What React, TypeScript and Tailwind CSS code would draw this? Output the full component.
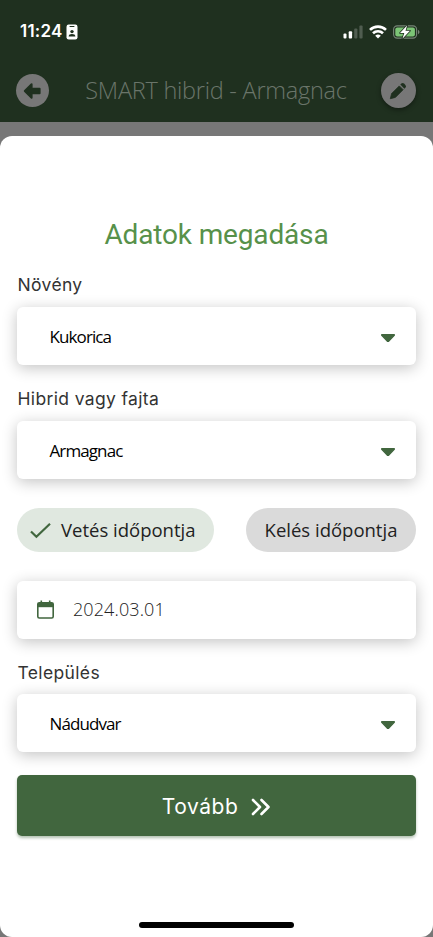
import { useState } from 'react';
import type { ReactNode } from 'react';

function StatusBar() {
  return (
    <div className="flex h-[63px] items-center pl-[20px] pr-[13px] text-white">
      <span className="font-['Inter'] text-[17px] font-semibold leading-none tracking-[0.2px]">11:24</span>
      <svg className="ml-[4px]" width="12" height="16" viewBox="0 0 12 16">
        <rect x="0.5" y="0.5" width="11" height="15" rx="2.2" fill="#fff" />
        <rect x="3.5" y="2" width="5" height="1" rx="0.5" fill="#1f301f" />
        <circle cx="6" cy="7.6" r="1.7" fill="#1f301f" />
        <path d="M2.6 12.6c0-1.8 1.5-2.6 3.4-2.6s3.4.8 3.4 2.6z" fill="#1f301f" />
      </svg>
      <div className="ml-auto flex items-center">
        <svg width="20" height="14" viewBox="0 0 20 14" fill="#fff">
          <rect x="0.5" y="8.5" width="3" height="5" rx="1" />
          <rect x="5.7" y="6.3" width="3.4" height="7.2" rx="1" />
          <rect x="11.2" y="3.6" width="3.2" height="9.9" rx="1" fillOpacity="0.22" />
          <rect x="16.4" y="0.5" width="3.2" height="13" rx="1" fillOpacity="0.22" />
        </svg>
        <svg className="ml-[6px]" width="18" height="14" viewBox="0 0 18 14" fill="none" stroke="#fff" strokeWidth="2.6">
          <path d="M1 4.9a11.5 11.5 0 0 1 16 0" />
          <path d="M4 8.3a7.2 7.2 0 0 1 10 0" />
          <path d="M9 13.6 6.2 10.8a4 4 0 0 1 5.6 0z" fill="#fff" stroke="none" />
        </svg>
        <svg className="ml-[6px]" width="27" height="14" viewBox="0 0 27 14">
          <rect x="0.6" y="0.9" width="23" height="12.2" rx="3.6" fill="none" stroke="#778577" strokeWidth="1.1" />
          <rect x="2.3" y="2.6" width="19.6" height="8.8" rx="2" fill="#7cc576" />
          <path d="M25 5v4.2c.9-.4 1.5-1.2 1.5-2.1S25.9 5.4 25 5z" fill="#778577" />
          <path
            d="M14.2 0.3 7 8h4.3l-1.9 5.7 7.6-7.9h-4.5z"
            fill="#fff"
            stroke="#1f301f"
            strokeWidth="1.6"
            strokeLinejoin="round"
            paintOrder="stroke"
          />
        </svg>
      </div>
    </div>
  );
}

function Header() {
  return (
    <header className="h-[122px] bg-[#1f301f]">
      <StatusBar />
      <div className="flex h-[55px] items-center justify-between pl-4 pr-[17px]">
        <button className="flex size-[33px] items-center justify-center rounded-full bg-[#777]">
          <svg width="19" height="18" viewBox="0 0 19 18" fill="#1f301f" stroke="#1f301f" strokeLinejoin="round">
            <path d="M1.8 9 8.6 2.3V6.8H16.600v4.400H8.600v4.500z" strokeWidth="2" />
          </svg>
        </button>
        <h1 className="whitespace-nowrap pl-[2px] font-['Open_Sans'] text-[23.5px] font-light leading-none tracking-[-0.25px] text-[#6a756a]">
          SMART hibrid - Armagnac
        </h1>
        <button className="flex size-[35px] items-center justify-center rounded-full bg-[#777] shadow-[0_2px_5px_rgba(0,0,0,0.4)]">
          <svg width="18" height="18" viewBox="0 0 18 18" fill="#1f301f">
            <path
              d="M1.3 16.7l1.3-5.1 7.7-7.7 3.8 3.8-7.7 7.7z"
              strokeLinejoin="round"
              stroke="#1f301f"
              strokeWidth="0.8"
            />
            <path d="M11.3 2.6l1-1a2 2 0 0 1 2.8 0l1.3 1.3a2 2 0 0 1 0 2.8l-1 1z" />
          </svg>
        </button>
      </div>
    </header>
  );
}

function Card({ children }: { children: ReactNode }) {
  return (
    <div className="flex h-[58px] items-center rounded-md bg-white shadow-[0_3px_15px_rgba(0,0,0,0.24)]">
      {children}
    </div>
  );
}

function Label({ children }: { children: ReactNode }) {
  return (
    <label className="block h-[22px] pl-[0.5px] font-['Inter'] text-[17.5px] leading-[22px] tracking-[0.35px] text-[#333]">
      {children}
    </label>
  );
}

function SelectField({ value }: { value: string }) {
  return (
    <Card>
      <span className="pl-[32.5px] pt-[2px] font-['Open_Sans'] text-[17px] leading-6 tracking-[-0.9px] text-black">{value}</span>
      <svg className="ml-auto mr-[20px] mt-[4px]" width="16" height="10" viewBox="0 0 16 10">
        <path d="M1.7 1.5h12.6v.8L8.6 8.3H7.4L1.7 2.3z" fill="#41663e" stroke="#41663e" strokeWidth="1.2" strokeLinejoin="round" />
      </svg>
    </Card>
  );
}

export default function App() {
  const [mode, setMode] = useState('vetes');

  return (
    <div className="flex h-[937px] w-[433px] flex-col overflow-hidden bg-[#777]">
      <Header />

      <main className="mt-[13.5px] flex flex-1 flex-col rounded-xl bg-white px-[17px]">
        <h2 className="mt-[81px] text-center font-['Roboto'] text-[28px] leading-9 tracking-[-0.16px] text-[#57914a]">
          Adatok megadása
        </h2>

        <div className="mt-[21px]">
          <Label>Növény</Label>
          <div className="mt-[11px]">
            <SelectField value="Kukorica" />
          </div>
        </div>

        <div className="mt-[23px]">
          <Label>Hibrid vagy fajta</Label>
          <div className="mt-[11px]">
            <SelectField value="Armagnac" />
          </div>
        </div>

        <div className="mt-[29px] flex justify-between font-['Open_Sans'] text-[18.5px] text-[#222]">
          <button onClick={() => setMode('vetes')} className="flex h-[44px] w-[197px] items-center rounded-full bg-[#e0e8e0] pl-[13px]">
            {mode === 'vetes' && (
              <svg className="mt-[2px]" width="21" height="17" viewBox="0 0 21 17" fill="none" stroke="#41663e" strokeWidth="2.2">
                <path d="M1 9.5l5.4 5.3L20 1.8" />
              </svg>
            )}
            <span className="ml-[10px]">Vetés időpontja</span>
          </button>
          <button onClick={() => setMode('keles')} className="h-[44px] w-[170px] rounded-full bg-[#dadada]">
            Kelés időpontja
          </button>
        </div>

        <div className="mt-[29px]">
          <Card>
            <svg className="ml-[19.5px]" width="17" height="19" viewBox="0 0 17 19">
              <path d="M4.3 0.5v3M12.7 0.5v3" stroke="#41663e" strokeWidth="1.6" />
              <rect x="0.8" y="2.7" width="15.4" height="15.3" rx="1.5" fill="none" stroke="#41663e" strokeWidth="1.6" />
              <path d="M0.8 3h15.4v4.2H0.8z" fill="#41663e" />
            </svg>
            <span className="ml-[19.5px] font-['Open_Sans'] text-[18px] font-light tracking-[0.1px] text-[#222]">2024.03.01</span>
          </Card>
        </div>

        <div className="mt-[23px]">
          <Label>Település</Label>
          <div className="mt-[10.5px]">
            <SelectField value="Nádudvar" />
          </div>
        </div>

        <button className="mt-[23px] flex h-[61px] shrink-0 items-center justify-center rounded-[5px] bg-[#41663e] pt-[2px] text-white shadow-[0_2px_3px_rgba(65,102,62,0.4)]">
          <span className="font-['Inter'] text-[21px] tracking-[0.55px]">Tovább</span>
          <svg className="ml-[13px]" width="20" height="18" viewBox="0 0 20 18" fill="none" stroke="#fff" strokeWidth="2.6" strokeLinecap="round" strokeLinejoin="round">
            <path d="M2 2l7 7-7 7M10.5 2l7 7-7 7" />
          </svg>
        </button>

        <div className="mx-auto mb-[9px] mt-auto h-[6px] w-[155px] rounded-full bg-black" />
      </main>
    </div>
  );
}
